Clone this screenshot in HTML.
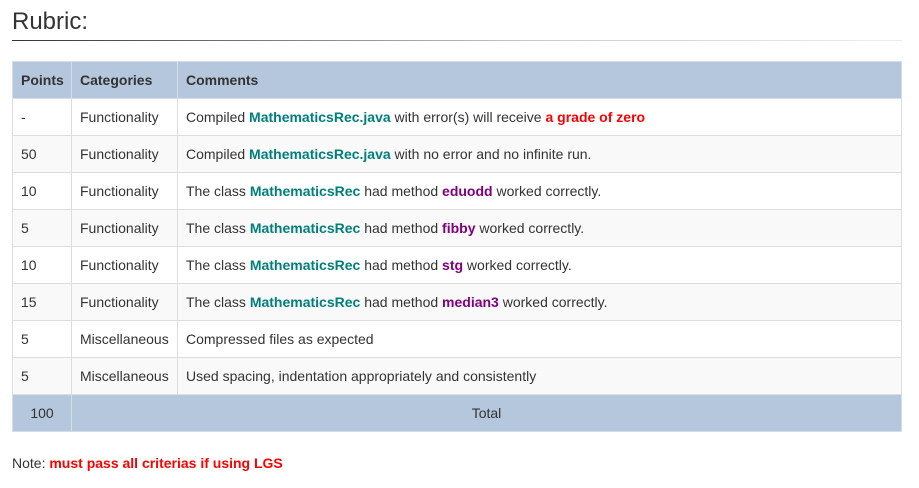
<!DOCTYPE html>
<html><head><style>
body{margin:0;background:#fff;font-family:"Liberation Sans",Arial,sans-serif;font-size:14px;color:#333;}
h2{position:absolute;left:12px;top:7px;margin:0;font-weight:normal;font-size:24px;line-height:30px;color:#333;}
.hr{position:absolute;left:12px;top:40px;width:890px;height:1px;background:linear-gradient(to right,#333,#ccc 60%,#eee);}
table{position:absolute;left:12px;top:61px;width:890px;border-collapse:collapse;table-layout:fixed;}
td,th{border:1px solid #ddd;height:36px;padding:0 8px;text-align:left;vertical-align:middle;white-space:nowrap;overflow:hidden;}
th{background:#b5c7dc;font-weight:bold;border-color:#d4dde8;}
tr:nth-child(odd) td{background:#f9f9f9;}
tr.tot td{background:#b5c7dc;border-color:#d4dde8;}
.t{color:#00807c;font-weight:bold}.p{color:#800080;font-weight:bold}.r{color:#f00;font-weight:bold}
.note{position:absolute;left:12px;top:455px;}
</style></head><body>
<h2>Rubric:</h2><div class="hr"></div>
<table>
<colgroup><col style="width:59px"><col style="width:106px"><col></colgroup>
<tr><th>Points</th><th>Categories</th><th>Comments</th></tr>
<tr><td>-</td><td>Functionality</td><td>Compiled <span class="t">MathematicsRec.java</span> with error(s) will receive <span class="r">a grade of zero</span></td></tr>
<tr><td>50</td><td>Functionality</td><td>Compiled <span class="t">MathematicsRec.java</span> with no error and no infinite run.</td></tr>
<tr><td>10</td><td>Functionality</td><td>The class <span class="t">MathematicsRec</span> had method <span class="p">eduodd</span> worked correctly.</td></tr>
<tr><td>5</td><td>Functionality</td><td>The class <span class="t">MathematicsRec</span> had method <span class="p">fibby</span> worked correctly.</td></tr>
<tr><td>10</td><td>Functionality</td><td>The class <span class="t">MathematicsRec</span> had method <span class="p">stg</span> worked correctly.</td></tr>
<tr><td>15</td><td>Functionality</td><td>The class <span class="t">MathematicsRec</span> had method <span class="p">median3</span> worked correctly.</td></tr>
<tr><td>5</td><td>Miscellaneous</td><td>Compressed files as expected</td></tr>
<tr><td>5</td><td>Miscellaneous</td><td>Used spacing, indentation appropriately and consistently</td></tr>
<tr class="tot"><td style="text-align:center">100</td><td colspan="2" style="text-align:center">Total</td></tr>
</table>
<div class="note">Note: <span class="r">must pass all criterias if using LGS</span></div>
</body></html>
